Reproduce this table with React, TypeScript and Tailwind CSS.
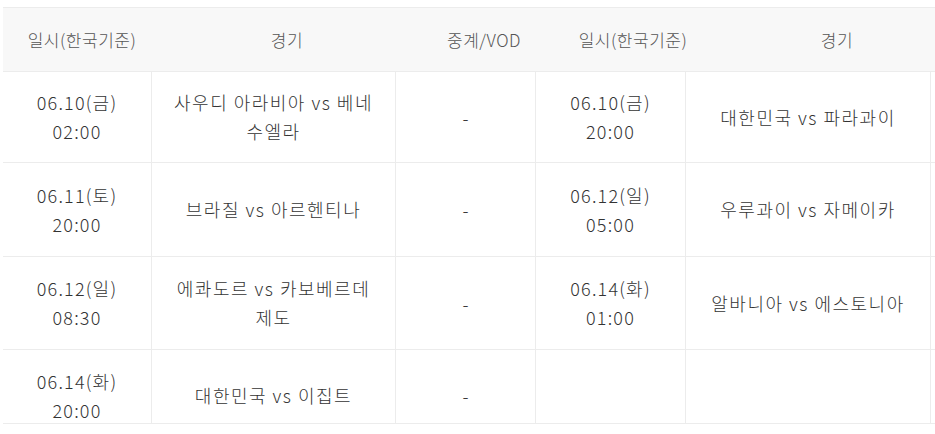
import React from 'react';

interface Match {
  date?: string;
  time?: string;
  title?: string[];
  vod?: string;
  date2?: string;
  time2?: string;
  title2?: string[];
  height: string;
  pad?: string;
}

const rows: Match[] = [
  {
    date: '06.10(금)',
    time: '02:00',
    title: ['사우디 아라비아 vs 베네', '수엘라'],
    vod: '-',
    date2: '06.10(금)',
    time2: '20:00',
    title2: ['대한민국 vs 파라과이'],
    height: 'h-[91px]',
  },
  {
    date: '06.11(토)',
    time: '20:00',
    title: ['브라질 vs 아르헨티나'],
    vod: '-',
    date2: '06.12(일)',
    time2: '05:00',
    title2: ['우루과이 vs 자메이카'],
    height: 'h-[94px]',
  },
  {
    date: '06.12(일)',
    time: '08:30',
    title: ['에콰도르 vs 카보베르데', '제도'],
    vod: '-',
    date2: '06.14(화)',
    time2: '01:00',
    title2: ['알바니아 vs 에스토니아'],
    height: 'h-[93px]',
  },
  {
    date: '06.14(화)',
    time: '20:00',
    title: ['대한민국 vs 이집트'],
    vod: '-',
    // last row sits a bit low in the original
    height: 'h-[74px]',
    pad: 'pt-[18px]',
  },
];

const cell = 'flex flex-col items-center justify-center text-center border-r border-[#ececec] shrink-0';

const Lines: React.FC<{ lines?: string[] }> = ({ lines }) => (
  <>
    {lines?.map((l, i) => (
      <span key={i} className="whitespace-nowrap">{l}</span>
    ))}
  </>
);

export default function App() {
  return (
    <div
      className="w-[935px] h-[434px] overflow-hidden bg-white pl-[3px] pt-[7px]"
      style={{ fontFamily: '"Noto Sans CJK KR", "Noto Sans", sans-serif' }}
    >
      <div className="w-[1000px]">
        {/* Header */}
        <div className="flex h-[65px] bg-[#f8f8f8] border-y border-[#ececec] text-[17px] text-[#555] tracking-[0.5px] font-light">
          <div className="w-[158px] flex items-center justify-center">일시(한국기준)</div>
          <div className="w-[252px] flex items-center justify-center">경기</div>
          <div className="w-[142px] flex items-center justify-center">중계/VOD</div>
          <div className="w-[156px] flex items-center justify-center">일시(한국기준)</div>
          <div className="w-[252px] flex items-center justify-center">경기</div>
        </div>

        {/* Body */}
        {rows.map((r, i) => {
          const pad = r.pad ?? '';
          return (
            <div key={i} className={`flex ${r.height} border-b border-[#ececec] text-[18px] leading-[29px] text-[#333] font-light`}>
              <div className={`${cell} ${pad} w-[149px] tracking-[1.2px]`}>
                <span>{r.date}</span>
                <span>{r.time}</span>
              </div>
              <div className={`${cell} ${pad} w-[244px] tracking-[1.5px]`}>
                <Lines lines={r.title} />
              </div>
              <div className={`${cell} ${pad} w-[140px]`}>{r.vod}</div>
              <div className={`${cell} ${pad} w-[150px] tracking-[1.2px]`}>
                <span>{r.date2}</span>
                <span>{r.time2}</span>
              </div>
              <div className={`${cell} ${pad} w-[245px] tracking-[1.5px]`}>
                <Lines lines={r.title2} />
              </div>
              <div className={`${cell} w-[60px]`} />
            </div>
          );
        })}
      </div>
    </div>
  );
}
